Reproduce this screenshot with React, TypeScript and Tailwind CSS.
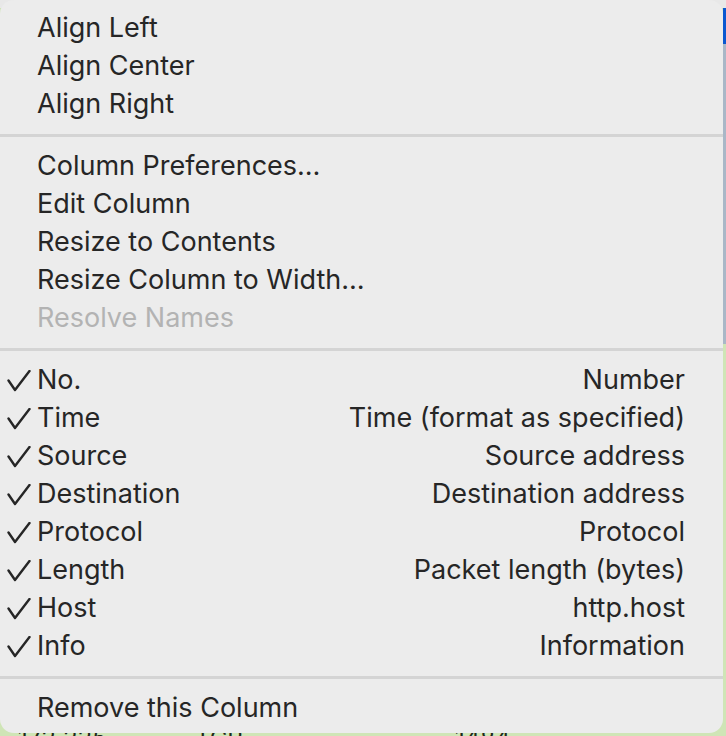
import React from 'react';

type Item = { label: string; disabled?: boolean };

const topItems: Item[] = [{ label: 'Align Left' }, { label: 'Align Center' }, { label: 'Align Right' }];

const columnItems: Item[] = [
  { label: 'Column Preferences…' },
  { label: 'Edit Column' },
  { label: 'Resize to Contents' },
  { label: 'Resize Column to Width…' },
  { label: 'Resolve Names', disabled: true },
];

const columns = [
  ['No.', 'Number'],
  ['Time', 'Time (format as specified)'],
  ['Source', 'Source address'],
  ['Destination', 'Destination address'],
  ['Protocol', 'Protocol'],
  ['Length', 'Packet length (bytes)'],
  ['Host', 'http.host'],
  ['Info', 'Information'],
];

function Check() {
  return (
    <svg width="24" height="22" viewBox="0 0 24 22" className="absolute left-[7px] top-[9px]">
      <path d="M1.5 10.5 L8 20 L22.5 1" fill="none" stroke="#262626" strokeWidth="2.4" strokeLinecap="round" strokeLinejoin="round" />
    </svg>
  );
}

function Row({ item }: { item: Item }) {
  return (
    <div className={`h-[38px] flex items-center pl-[37px] ${item.disabled ? 'text-[#b3b3b3]' : 'text-[#262626]'}`}>
      {item.label}
    </div>
  );
}

function Separator() {
  return (
    <div className="h-[24px] flex items-center">
      <div className="h-[3px] w-full bg-[#d4d4d4]" />
    </div>
  );
}

export default function App() {
  return (
    <div className="relative w-[726px] h-[736px] overflow-hidden bg-[#cfe5b6]" style={{ fontFamily: 'Inter, "Noto Sans", sans-serif' }}>
      {/* window content behind the menu */}
      <div className="flex flex-col h-full">
        <div className="h-[8px] bg-[#e8e8e8]" />
        <div className="h-[36px] flex justify-end"><div className="w-[3px] bg-[#0b57d0]" /></div>
        <div className="h-[300px] flex justify-end"><div className="w-[3px] bg-[#a9b7c7]" /></div>
        <div className="flex-1" />
        <div className="h-[9px] flex items-start text-[24px] leading-[24px] text-[#1e2a1a]">
          <span className="pl-[18px] w-[195px]">172.225…</span>
          <span className="w-[260px]">TCP</span>
          <span>1484</span>
        </div>
      </div>

      {/* context menu */}
      <div className="absolute left-0 top-0 w-[723px] h-[733px] bg-[#ececec] rounded-[14px] pt-[9px] text-[27px] leading-[38px]">
        {topItems.map(i => <Row key={i.label} item={i} />)}
        <Separator />
        {columnItems.map(i => <Row key={i.label} item={i} />)}
        <Separator />
        {columns.map(([name, desc]) => (
          <div key={name} className="relative h-[38px] flex items-center justify-between pl-[37px] pr-[38px] text-[#262626]">
            <Check />
            <span>{name}</span>
            <span>{desc}</span>
          </div>
        ))}
        <Separator />
        <Row item={{ label: 'Remove this Column' }} />
      </div>
    </div>
  );
}
